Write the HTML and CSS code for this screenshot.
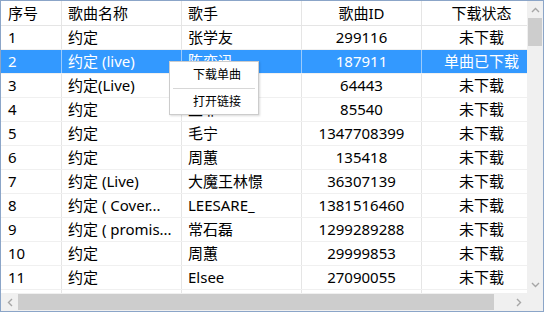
FILE: index.html
```html
<!DOCTYPE html>
<html lang="zh">
<head>
    <meta charset="UTF-8">
    <title>歌曲列表</title>
    <link rel="stylesheet" href="styles.css">
</head>
<body>
<div class="window">
    <div class="view">
        <div class="table">
            <div class="row head">
                <div class="cell c1">序号</div>
                <div class="cell c2">歌曲名称</div>
                <div class="cell c3">歌手</div>
                <div class="cell c4">歌曲ID</div>
                <div class="cell c5">下载状态</div>
            </div>
            <div class="row">
                <div class="cell c1">1</div><div class="cell c2">约定</div><div class="cell c3">张学友</div><div class="cell c4">299116</div><div class="cell c5">未下载</div>
            </div>
            <div class="row selected">
                <div class="cell c1">2</div><div class="cell c2">约定 (live)</div><div class="cell c3">陈奕迅</div><div class="cell c4">187911</div><div class="cell c5">单曲已下载</div>
            </div>
            <div class="row">
                <div class="cell c1">3</div><div class="cell c2">约定(Live)</div><div class="cell c3">王菲</div><div class="cell c4">64443</div><div class="cell c5">未下载</div>
            </div>
            <div class="row">
                <div class="cell c1">4</div><div class="cell c2">约定</div><div class="cell c3">王菲</div><div class="cell c4">85540</div><div class="cell c5">未下载</div>
            </div>
            <div class="row">
                <div class="cell c1">5</div><div class="cell c2">约定</div><div class="cell c3">毛宁</div><div class="cell c4">1347708399</div><div class="cell c5">未下载</div>
            </div>
            <div class="row">
                <div class="cell c1">6</div><div class="cell c2">约定</div><div class="cell c3">周蕙</div><div class="cell c4">135418</div><div class="cell c5">未下载</div>
            </div>
            <div class="row">
                <div class="cell c1">7</div><div class="cell c2">约定 (Live)</div><div class="cell c3">大魔王林憬</div><div class="cell c4">36307139</div><div class="cell c5">未下载</div>
            </div>
            <div class="row">
                <div class="cell c1">8</div><div class="cell c2">约定 ( Cover...</div><div class="cell c3">LEESARE_</div><div class="cell c4">1381516460</div><div class="cell c5">未下载</div>
            </div>
            <div class="row">
                <div class="cell c1">9</div><div class="cell c2">约定 ( promis...</div><div class="cell c3">常石磊</div><div class="cell c4">1299289288</div><div class="cell c5">未下载</div>
            </div>
            <div class="row">
                <div class="cell c1">10</div><div class="cell c2">约定</div><div class="cell c3">周蕙</div><div class="cell c4">29999853</div><div class="cell c5">未下载</div>
            </div>
            <div class="row">
                <div class="cell c1">11</div><div class="cell c2">约定</div><div class="cell c3">Elsee</div><div class="cell c4">27090055</div><div class="cell c5">未下载</div>
            </div>
            <!-- next row, scrolled out of view -->
            <div class="row">
                <div class="cell c1"></div><div class="cell c2"></div><div class="cell c3"></div><div class="cell c4"></div><div class="cell c5"></div>
            </div>
        </div>

        <!-- right-click menu -->
        <div class="menu">
            <div class="menu-item">下载单曲</div>
            <div class="menu-sep"></div>
            <div class="menu-item">打开链接</div>
        </div>
    </div>

    <div class="vscroll">
        <div class="arrow"><svg width="9" height="6" viewBox="0 0 9 6"><polyline points="1,5 4.5,1.5 8,5" fill="none" stroke="#a6a6a6" stroke-width="1.4"/></svg></div>
        <div class="vtrack"><div class="vthumb"></div></div>
        <div class="arrow"><svg width="9" height="6" viewBox="0 0 9 6"><polyline points="1,1 4.5,4.5 8,1" fill="none" stroke="#a6a6a6" stroke-width="1.4"/></svg></div>
    </div>

    <div class="hscroll">
        <div class="arrow"><svg width="6" height="9" viewBox="0 0 6 9"><polyline points="5,1 1.5,4.5 5,8" fill="none" stroke="#a6a6a6" stroke-width="1.4"/></svg></div>
        <div class="htrack"><div class="hthumb"></div></div>
        <div class="arrow"><svg width="6" height="9" viewBox="0 0 6 9"><polyline points="1,1 4.5,4.5 1,8" fill="none" stroke="#a6a6a6" stroke-width="1.4"/></svg></div>
    </div>

    <div class="corner"></div>
</div>
</body>
</html>
```

FILE: styles.css
```css
html, body {
    margin: 0;
    padding: 0;
    background: #fff;
}
body {
    font-family: "Noto Sans", "Noto Sans CJK SC", sans-serif;
    font-size: 15px;
    color: #000;
}
.window {
    width: 544px;
    height: 312px;
    box-sizing: border-box;
    border: 1px solid #8ba5c8;
    display: grid;
    grid-template-columns: 526px 16px;
    grid-template-rows: 292px 18px;
    overflow: hidden;
}
.view {
    position: relative;
    overflow: hidden;
    background: #fff;
}
.table {
    width: 541px;
}
.row {
    display: flex;
    height: 24px;
    border-bottom: 1px solid #f0f0f0;
    box-sizing: border-box;
}
.row.head {
    height: 25px;
    border-bottom: 1px solid #e5e5e5;
}
.cell {
    box-sizing: border-box;
    padding: 0 6px;
    line-height: 23px;
    white-space: nowrap;
    overflow: hidden;
    border-right: 1px solid #e5e5e5;
}
.head .cell {
    line-height: 24px;
}
.c1 { width: 61px; padding-left: 7px; }
.c2 { width: 120px; }
.c3 { width: 120px; }
.c4 { width: 120px; text-align: center; }
.c5 { width: 120px; text-align: center; }
.row.selected {
    background: #3399ff;
    color: #fff;
}
.row.selected .cell {
    border-right-color: #9ccbfb;
}

.menu {
    position: absolute;
    left: 168px;
    top: 60px;
    width: 88px;
    background: #fff;
    border: 1px solid #cccccc;
    box-shadow: 1px 1px 2px rgba(0, 0, 0, 0.15);
    padding: 1px 0 0;
    font-size: 12px;
    color: #000;
}
.menu-item {
    height: 24px;
    line-height: 24px;
    text-align: center;
    padding-left: 6px;
}
.menu-sep {
    height: 1px;
    margin: 1px 3px;
    background: #d7d7d7;
}

.vscroll {
    display: flex;
    flex-direction: column;
    background: #f0f0f0;
}
.vscroll .arrow {
    height: 17px;
    display: flex;
    align-items: center;
    justify-content: center;
}
.vtrack {
    flex: 1;
    padding: 0 1px;
}
.vthumb {
    height: 28px;
    background: #cdcdcd;
}
.hscroll {
    display: flex;
    background: #f0f0f0;
}
.hscroll .arrow {
    width: 17px;
    display: flex;
    align-items: center;
    justify-content: center;
}
.htrack {
    flex: 1;
    padding: 1px 0;
}
.hthumb {
    width: 476px;
    height: 100%;
    background: #cdcdcd;
}
.corner {
    background: #f0f0f0;
}
```
